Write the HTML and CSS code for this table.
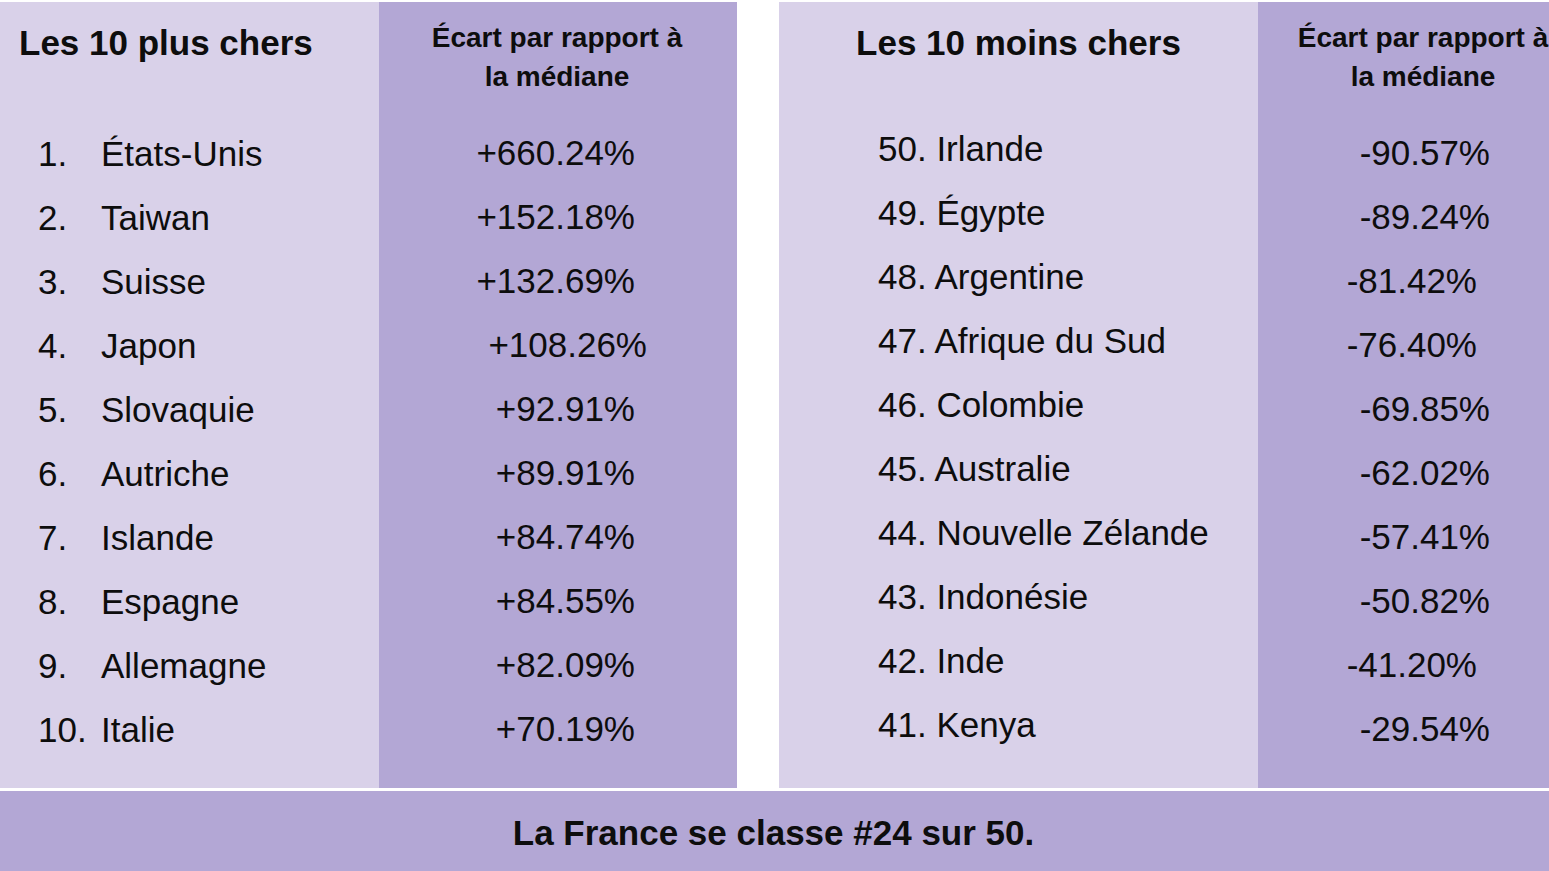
FILE: index.html
```html
<!DOCTYPE html>
<html lang="fr">
<head>
<meta charset="utf-8">
<title>Les 10 plus chers / moins chers</title>
<link rel="stylesheet" href="styles.css">
</head>
<body>
<div class="page">
  <div class="panels">
    <section class="panel panel-left">
      <div class="col col-light">
        <div class="head head-left">Les 10 plus chers</div>
        <ol class="rows">
          <li class="row"><span class="num">1.</span><span>États-Unis</span></li>
          <li class="row"><span class="num">2.</span><span>Taiwan</span></li>
          <li class="row"><span class="num">3.</span><span>Suisse</span></li>
          <li class="row"><span class="num">4.</span><span>Japon</span></li>
          <li class="row"><span class="num">5.</span><span>Slovaquie</span></li>
          <li class="row"><span class="num">6.</span><span>Autriche</span></li>
          <li class="row"><span class="num">7.</span><span>Islande</span></li>
          <li class="row"><span class="num">8.</span><span>Espagne</span></li>
          <li class="row"><span class="num">9.</span><span>Allemagne</span></li>
          <li class="row"><span class="num">10.</span><span>Italie</span></li>
        </ol>
      </div>
      <div class="col col-dark col-dark-left">
        <div class="head head-dark">Écart par rapport à<br>la médiane</div>
        <ol class="rows vals vals-left">
          <li class="row val">+660.24%</li>
          <li class="row val">+152.18%</li>
          <li class="row val">+132.69%</li>
          <li class="row val val-shift-right">+108.26%</li>
          <li class="row val">+92.91%</li>
          <li class="row val">+89.91%</li>
          <li class="row val">+84.74%</li>
          <li class="row val">+84.55%</li>
          <li class="row val">+82.09%</li>
          <li class="row val">+70.19%</li>
        </ol>
      </div>
    </section>
    <section class="panel panel-right">
      <div class="col col-light col-light-right">
        <div class="head head-center">Les 10 moins chers</div>
        <ol class="rows rows-right">
          <li class="row">50. Irlande</li>
          <li class="row">49. Égypte</li>
          <li class="row">48. Argentine</li>
          <li class="row">47. Afrique du Sud</li>
          <li class="row">46. Colombie</li>
          <li class="row">45. Australie</li>
          <li class="row">44. Nouvelle Zélande</li>
          <li class="row">43. Indonésie</li>
          <li class="row">42. Inde</li>
          <li class="row">41. Kenya</li>
        </ol>
      </div>
      <div class="col col-dark col-dark-right">
        <div class="head head-dark">Écart par rapport à<br>la médiane</div>
        <ol class="rows vals vals-right">
          <li class="row val">-90.57%</li>
          <li class="row val">-89.24%</li>
          <li class="row val val-shift-left">-81.42%</li>
          <li class="row val val-shift-left">-76.40%</li>
          <li class="row val">-69.85%</li>
          <li class="row val">-62.02%</li>
          <li class="row val">-57.41%</li>
          <li class="row val">-50.82%</li>
          <li class="row val val-shift-left">-41.20%</li>
          <li class="row val">-29.54%</li>
        </ol>
      </div>
    </section>
  </div>
  <div class="footer">La France se classe #24 sur 50.</div>
</div>
</body>
</html>
```

FILE: styles.css
```css
* { box-sizing: border-box; }

html, body {
  margin: 0;
  padding: 0;
  background: #ffffff;
  width: 1549px;
  height: 871px;
  overflow: hidden;
}

body {
  font-family: "Liberation Sans", Arial, sans-serif;
  color: #0d0d0d;
}

.page {
  padding-top: 2px;
  display: flex;
  flex-direction: column;
  gap: 3px;
  width: 1549px;
  overflow: hidden;
}

.panels {
  display: flex;
  gap: 42px;
  height: 786px;
}

.panel {
  display: flex;
  flex-shrink: 0;
  height: 100%;
}

.col {
  display: flex;
  flex-direction: column;
  height: 100%;
  flex-shrink: 0;
}

.col-light { background: #d9d1e9; width: 379px; }
.col-light-right { width: 479px; }
.col-dark { background: #b3a7d5; }
.col-dark-left { width: 358px; }
.col-dark-right { width: 332px; }

.head {
  height: 120px;
  flex-shrink: 0;
  font-weight: bold;
}

.head-left {
  font-size: 35px;
  line-height: 40px;
  padding: 21px 0 0 19px;
}

.head-center {
  font-size: 35px;
  line-height: 40px;
  padding-top: 21px;
  text-align: center;
}

.head-dark {
  font-size: 28px;
  line-height: 39px;
  padding-top: 16px;
  padding-right: 2px;
  text-align: center;
}

.rows {
  list-style: none;
  margin: 0;
  padding: 0;
}

.row {
  height: 64px;
  font-size: 35px;
  line-height: 64px;
  display: flex;
  white-space: nowrap;
}

.rows .row { padding-left: 38px; }
.num { width: 63px; flex-shrink: 0; }

.rows-right { margin-top: -5px; }
.rows-right .row { padding-left: 99px; }

.vals .row { padding-left: 0; justify-content: flex-end; }
.vals-left .row { padding-right: 102px; margin-top: -1px; margin-bottom: 1px; }
.vals-right .row { padding-right: 100px; margin-top: -1px; margin-bottom: 1px; }

.vals-left .val-shift-right { padding-right: 90px; }
.vals-right .val-shift-left { padding-right: 113px; }

.footer {
  height: 80px;
  background: #b3a7d5;
  display: flex;
  align-items: center;
  justify-content: center;
  font-weight: bold;
  font-size: 35px;
  padding-top: 4px;
  padding-right: 2px;
}
```
